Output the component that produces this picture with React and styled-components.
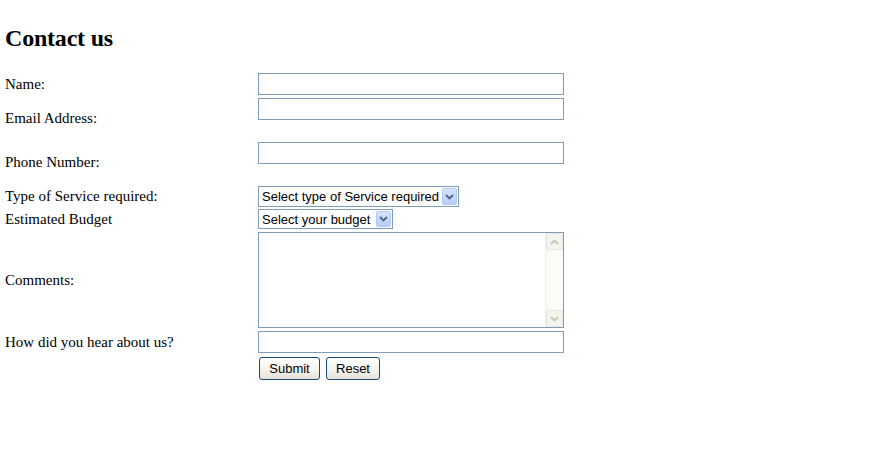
import React from "react";
import styled, { createGlobalStyle } from "styled-components";

const GlobalStyle = createGlobalStyle`
  html, body {
    margin: 0;
    padding: 0;
    background: #fff;
    color: #000;
    font-family: "Liberation Serif", "Times New Roman", serif;
  }
`;

const Page = styled.div`
  padding: 24px 5px 0 5px;
`;

const Title = styled.h2`
  margin: 0 0 21px 0;
  font-size: 24px;
  line-height: 28px;
  font-weight: bold;
  letter-spacing: -0.2px;
`;

const Form = styled.form`
  display: grid;
  grid-template-columns: 253px 306px;
  row-gap: 3px;
  align-items: center;
`;

const Label = styled.label`
  font-size: 15px;
  line-height: 17px;
`;

const Field = styled.div`
  display: flex;
  flex-direction: column;
  align-items: flex-start;
  padding-bottom: ${(p) => p.$extra || 0}px;
  margin-bottom: ${(p) => p.$pull || 0}px;
`;

const TextInput = styled.input`
  box-sizing: border-box;
  width: 306px;
  height: 22px;
  margin: 0;
  border: 1px solid #7f9db9;
  padding: 1px 3px;
  font: 13px "Liberation Sans", Arial, sans-serif;
  outline: none;
  background: #fff;
`;

const SelectBox = styled.div`
  box-sizing: border-box;
  display: inline-flex;
  align-items: center;
  width: ${(p) => p.$width}px;
  height: ${(p) => p.$height}px;
  border: 1px solid #7f9db9;
  background: #fff;
  padding: 0 1px 0 0;
`;

const NativeSelect = styled.select`
  flex: 1;
  min-width: 0;
  height: 100%;
  appearance: none;
  -webkit-appearance: none;
  border: none;
  outline: none;
  background: transparent;
  padding: 0 0 0 3px;
  margin: 0;
  font: 13px "Liberation Sans", Arial, sans-serif;
  color: #000;
`;

const ArrowButton = styled.span`
  box-sizing: border-box;
  display: flex;
  align-items: center;
  justify-content: center;
  width: 15px;
  height: ${(p) => p.$height}px;
  border: 1px solid #b4c8f6;
  border-radius: 2px;
  background: linear-gradient(#d6e3fd, #b9cdf9);
`;

const Chevron = ({ color = "#4d6185", up = false }) => (
  <svg width="9" height="6" viewBox="0 0 9 6">
    <path
      d={up ? "M1 5 L4.5 1.5 L8 5" : "M1 1 L4.5 4.5 L8 1"}
      fill="none"
      stroke={color}
      strokeWidth="1.8"
    />
  </svg>
);

const TextAreaBox = styled.div`
  box-sizing: border-box;
  display: flex;
  width: 306px;
  height: 96px;
  border: 1px solid #7f9db9;
  background: #fff;
`;

const TextArea = styled.textarea`
  flex: 1;
  border: none;
  outline: none;
  resize: none;
  overflow: hidden;
  margin: 0;
  padding: 2px 3px;
  font: 13px "Liberation Sans", Arial, sans-serif;
`;

const ScrollBar = styled.div`
  display: flex;
  flex-direction: column;
  width: 17px;
  background: #fbfbf8;
  border-left: 1px solid #f1f0ea;
`;

const ScrollButton = styled.span`
  box-sizing: border-box;
  display: flex;
  align-items: center;
  justify-content: center;
  height: 17px;
  border: 1px solid #e6e5df;
  border-radius: 2px;
  background: #f5f4ef;
`;

const ScrollTrack = styled.span`
  flex: 1;
`;

const ButtonRow = styled.div`
  display: flex;
  gap: 6px;
  margin-top: 1px;
  padding-left: 1px;
`;

const Button = styled.button`
  box-sizing: border-box;
  width: ${(p) => p.$width}px;
  height: 23px;
  margin: 0;
  padding: 0;
  border: 1px solid #1c4a7a;
  border-radius: 3px;
  background: linear-gradient(#ffffff, #f3f2ec 60%, #e3e1d6);
  font: 13px "Liberation Sans", Arial, sans-serif;
  color: #000;
`;

const App = () => {
  return (
    <>
      <GlobalStyle />
      <Page>
        <Title>Contact us</Title>
        <Form onSubmit={(e) => e.preventDefault()}>
          <Label>Name:</Label>
          <Field>
            <TextInput type="text" />
          </Field>

          <Label>Email Address:</Label>
          <Field $extra={19}>
            <TextInput type="text" />
          </Field>

          <Label>Phone Number:</Label>
          <Field $extra={19}>
            <TextInput type="text" />
          </Field>

          <Label>Type of Service required:</Label>
          <Field $pull={-1}>
            <SelectBox $width={201} $height={21}>
              <NativeSelect defaultValue="">
                <option value="">Select type of Service required</option>
              </NativeSelect>
              <ArrowButton $height={17}>
                <Chevron />
              </ArrowButton>
            </SelectBox>
          </Field>

          <Label>Estimated Budget</Label>
          <Field>
            <SelectBox $width={135} $height={20}>
              <NativeSelect defaultValue="">
                <option value="">Select your budget</option>
              </NativeSelect>
              <ArrowButton $height={16}>
                <Chevron />
              </ArrowButton>
            </SelectBox>
          </Field>

          <Label>Comments:</Label>
          <Field>
            <TextAreaBox>
              <TextArea />
              <ScrollBar>
                <ScrollButton>
                  <Chevron up color="#c9c6b8" />
                </ScrollButton>
                <ScrollTrack />
                <ScrollButton>
                  <Chevron color="#c9c6b8" />
                </ScrollButton>
              </ScrollBar>
            </TextAreaBox>
          </Field>

          <Label>How did you hear about us?</Label>
          <Field>
            <TextInput type="text" />
          </Field>

          <span />
          <ButtonRow>
            <Button type="submit" $width={61}>
              Submit
            </Button>
            <Button type="reset" $width={54}>
              Reset
            </Button>
          </ButtonRow>
        </Form>
      </Page>
    </>
  );
};

export default App;
